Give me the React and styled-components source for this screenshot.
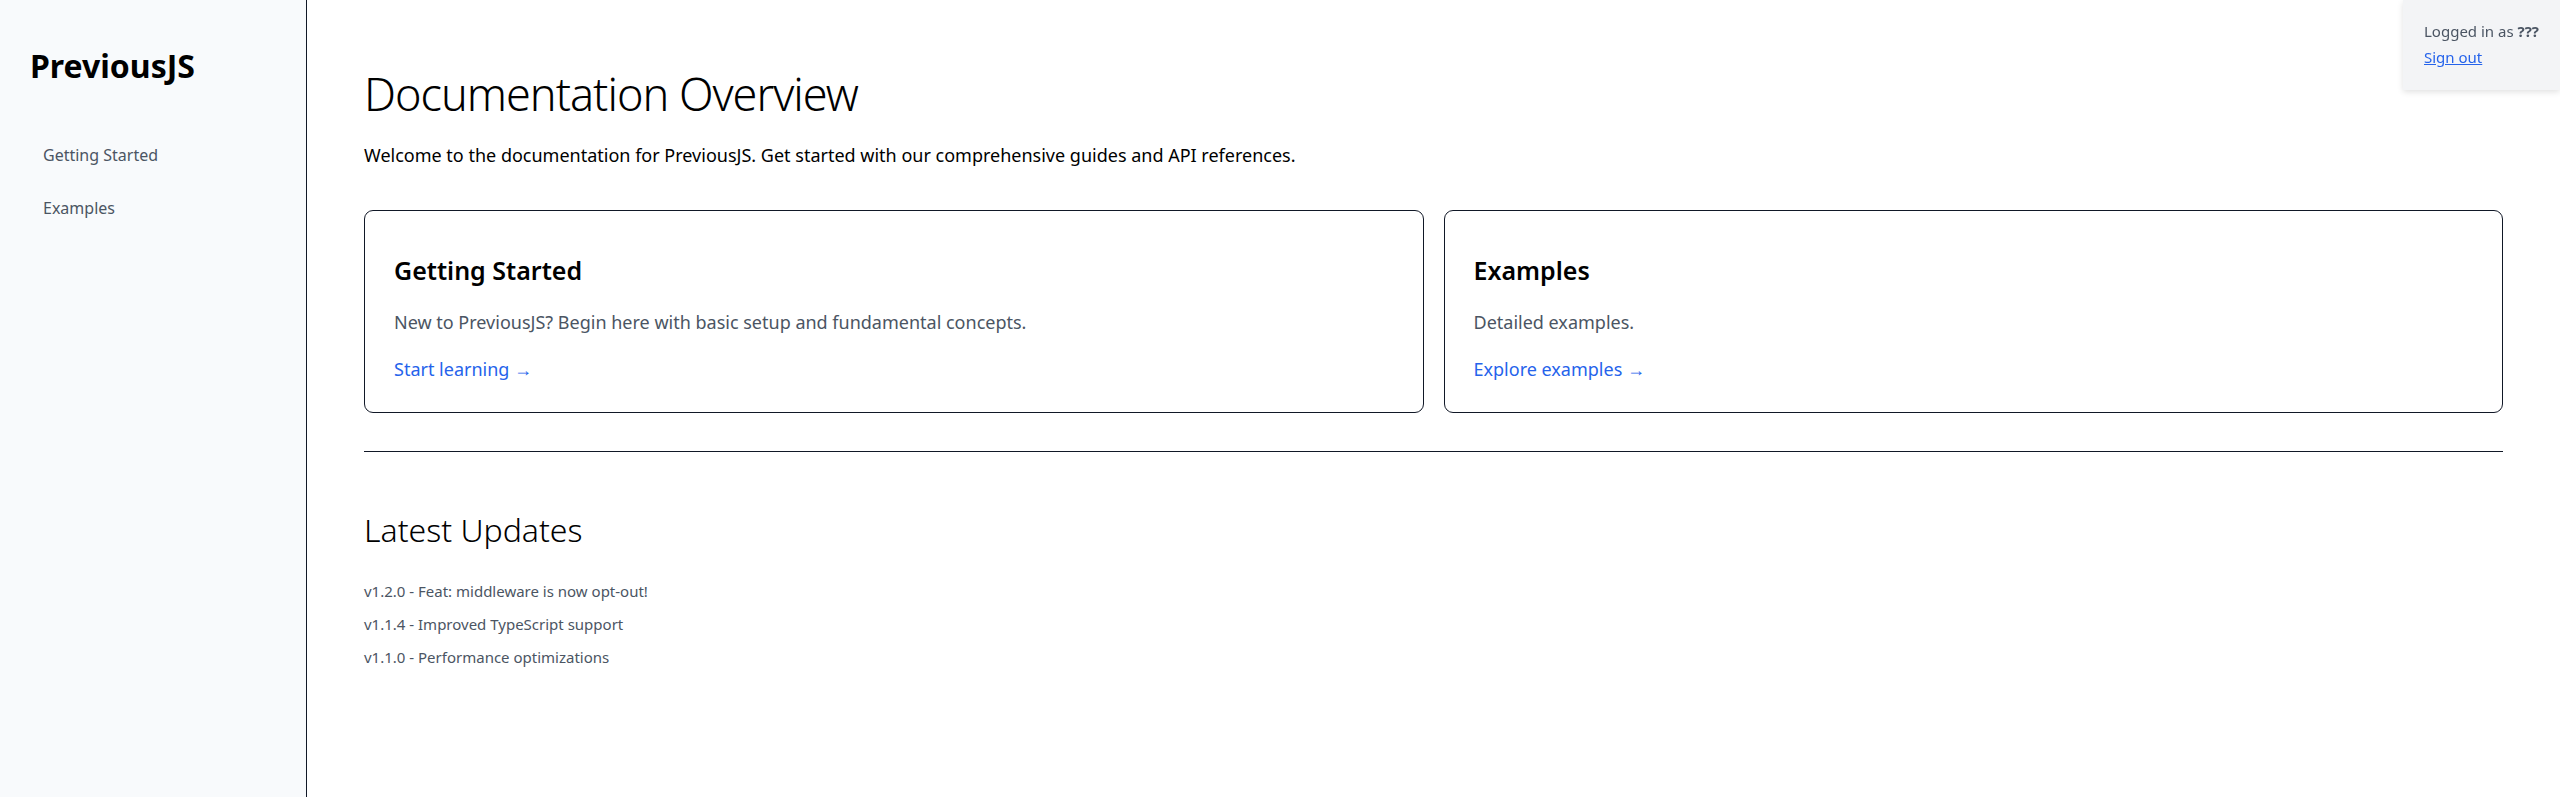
import React from 'react';
import styled, { createGlobalStyle } from 'styled-components';

const GlobalStyle = createGlobalStyle`
  html, body {
    margin: 0;
    padding: 0;
    background: #ffffff;
    font-family: 'Noto Sans', 'Open Sans', sans-serif;
    color: #000000;
  }
  * {
    box-sizing: border-box;
  }
`;

const navItems = ['Getting Started', 'Examples'];

const cards = [
  {
    title: 'Getting Started',
    text: 'New to PreviousJS? Begin here with basic setup and fundamental concepts.',
    link: 'Start learning →',
  },
  {
    title: 'Examples',
    text: 'Detailed examples.',
    link: 'Explore examples →',
  },
];

const updates = [
  'v1.2.0 - Feat: middleware is now opt-out!',
  'v1.1.4 - Improved TypeScript support',
  'v1.1.0 - Performance optimizations',
];

const App = () => {
  return (
    <StyledLayout>
      <GlobalStyle />
      <StyledSidebar>
        <StyledBrand>PreviousJS</StyledBrand>
        <StyledNav>
          {navItems.map((item) => (
            <StyledNavLink key={item} href='#'>
              {item}
            </StyledNavLink>
          ))}
        </StyledNav>
      </StyledSidebar>

      <StyledMain>
        <StyledTitle>Documentation Overview</StyledTitle>
        <StyledIntro>
          Welcome to the documentation for PreviousJS. Get started with our
          comprehensive guides and API references.
        </StyledIntro>

        <StyledCardGrid>
          {cards.map((card) => (
            <StyledCard key={card.title}>
              <StyledCardTitle>{card.title}</StyledCardTitle>
              <StyledCardText>{card.text}</StyledCardText>
              <StyledCardLink href='#'>{card.link}</StyledCardLink>
            </StyledCard>
          ))}
        </StyledCardGrid>

        <StyledDivider />

        <StyledSubtitle>Latest Updates</StyledSubtitle>
        <StyledUpdateList>
          {updates.map((update) => (
            <li key={update}>{update}</li>
          ))}
        </StyledUpdateList>
      </StyledMain>

      {/* session badge */}
      <StyledSession>
        <StyledSessionText>
          Logged in as <b>???</b>
        </StyledSessionText>
        <StyledSignOut href='#'>Sign out</StyledSignOut>
      </StyledSession>
    </StyledLayout>
  );
};

const StyledLayout = styled.div`
  display: flex;
  min-height: 100vh;
`;
const StyledSidebar = styled.aside`
  width: 307px;
  flex-shrink: 0;
  background: #f8fafc;
  border-right: 1px solid #111827;
  padding: 46px 30px;
`;
const StyledBrand = styled.h1`
  margin: 0 0 51px;
  font-size: 32px;
  line-height: 40px;
  font-weight: 700;
`;
const StyledNav = styled.nav`
  display: flex;
  flex-direction: column;
  gap: 17px;
`;
const StyledNavLink = styled.a`
  display: block;
  padding: 6px 13px;
  font-size: 16px;
  line-height: 24px;
  color: #4b5563;
  text-decoration: none;
`;
const StyledMain = styled.main`
  flex: 1;
  min-width: 0;
  padding: 64px 57px;
`;
const StyledTitle = styled.h2`
  margin: 0;
  font-size: 45px;
  line-height: 60px;
  font-weight: 300;
  letter-spacing: -1px;
`;
const StyledIntro = styled.p`
  margin: 17px 0 41px;
  font-size: 18px;
  line-height: 28px;
`;
const StyledCardGrid = styled.div`
  display: grid;
  grid-template-columns: 1fr 1fr;
  gap: 20px;
`;
const StyledCard = styled.div`
  border: 1px solid #111827;
  border-radius: 9px;
  padding: 43px 29px 0;
  height: 203px;
`;
const StyledCardTitle = styled.h3`
  margin: 0 0 22px;
  font-size: 25px;
  line-height: 32px;
  font-weight: 600;
`;
const StyledCardText = styled.p`
  margin: 0 0 19px;
  font-size: 18px;
  line-height: 28px;
  color: #4b5563;
`;
const StyledCardLink = styled.a`
  display: inline-block;
  font-size: 18px;
  line-height: 28px;
  color: #2563eb;
  text-decoration: none;
`;
const StyledDivider = styled.hr`
  margin: 38px 0 0;
  border: none;
  border-top: 1px solid #111827;
`;
const StyledSubtitle = styled.h2`
  margin: 58px 0 29px;
  font-size: 32px;
  line-height: 40px;
  font-weight: 300;
`;
const StyledUpdateList = styled.ul`
  margin: 0;
  padding: 0;
  list-style: none;
  display: flex;
  flex-direction: column;
  gap: 9px;
  font-size: 15px;
  line-height: 24px;
  color: #4b5563;
`;
const StyledSession = styled.div`
  position: fixed;
  top: 0;
  right: 0;
  width: 157px;
  padding: 18px 21px 20px;
  background: #f3f4f6;
  box-shadow: 0 2px 6px rgba(0, 0, 0, 0.12);
  font-size: 15px;
  line-height: 26px;
`;
const StyledSessionText = styled.div`
  color: #4b5563;
  b {
    font-weight: 700;
  }
`;
const StyledSignOut = styled.a`
  color: #2563eb;
  text-decoration: underline;
`;

export default App;
